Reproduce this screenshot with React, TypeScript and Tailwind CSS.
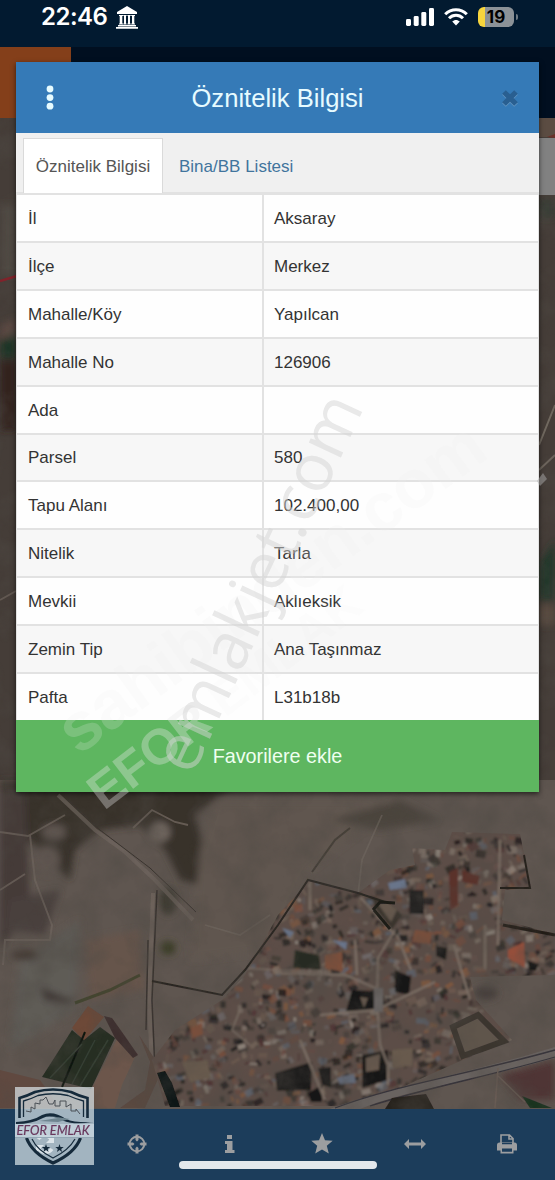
import type { ReactNode } from "react";

const rows = [
  { label: "İl", value: "Aksaray" },
  { label: "İlçe", value: "Merkez" },
  { label: "Mahalle/Köy", value: "Yapılcan" },
  { label: "Mahalle No", value: "126906" },
  { label: "Ada", value: "" },
  { label: "Parsel", value: "580" },
  { label: "Tapu Alanı", value: "102.400,00" },
  { label: "Nitelik", value: "Tarla" },
  { label: "Mevkii", value: "Aklıeksik" },
  { label: "Zemin Tip", value: "Ana Taşınmaz" },
  { label: "Pafta", value: "L31b18b" },
];

function random(seed: number) {
  let s = seed;
  return () => {
    s = (s * 16807) % 2147483647;
    return s / 2147483647;
  };
}

const roofs = [
  "#7b4f3c", "#6b4a40", "#1f1a1b", "#17191a", "#6f6a6b", "#5d6470", "#82766c",
  "#84593f", "#4d3030", "#2b2a26", "#7a6a5e", "#958b82", "#3a3432", "#66504a",
  "#6d5a50", "#25211f",
];

const rnd = random(4217);
const houses = Array.from({ length: 1900 }, () => ({
  x: 145 + rnd() * 410,
  y: 830 + rnd() * 280,
  w: 2 + rnd() * 8,
  h: 2 + rnd() * 6,
  r: -40 + rnd() * 60,
  fill: roofs[Math.floor(rnd() * roofs.length)],
  o: 0.4 + rnd() * 0.5,
}));

function SatelliteMap() {
  return (
    <svg className="absolute inset-0" width="555" height="1180" viewBox="0 0 555 1180">
      <defs>
        <filter id="soft" x="-20%" y="-20%" width="140%" height="140%">
          <feGaussianBlur stdDeviation="3.5" />
        </filter>
        <filter id="slight">
          <feGaussianBlur stdDeviation="0.7" />
        </filter>
        <filter id="roofs">
          <feGaussianBlur stdDeviation="0.8" />
        </filter>
        <filter id="grain" x="0" y="0" width="100%" height="100%">
          <feTurbulence type="fractalNoise" baseFrequency="0.03" numOctaves="6" seed="8" />
          <feColorMatrix values="0 0 0 0 0.08  0 0 0 0 0.07  0 0 0 0 0.06  1.9 0 0 0 -0.75" />
        </filter>
        <clipPath id="village">
          <path d="M310 880L358 893L390 870L415 865L412 848L445 850L452 832L520 834L531 888L505 890L502 920L555 934V975L470 977L476 1000L512 1040L458 1062L400 1088L345 1106H165L152 1060L175 1030L222 1000L245 975L278 915Z" />
        </clipPath>
      </defs>
      <rect width="555" height="1180" fill="#5f5650" />
      <rect width="555" height="780" fill="#453d38" />

      <g filter="url(#soft)">
        <path d="M0 780H240L195 815L207 860L200 885L180 880L165 850L140 825L100 830L75 850L70 880L48 860L30 840L0 900Z" fill="#37312c" />
        <path d="M0 790H25L30 910L0 950Z" fill="#443a39" />
        <path d="M10 900L60 890L45 935L5 930Z" fill="#493f3d" />
        <path d="M20 960L80 920L75 1010L10 1050Z" fill="#5e5c56" />
        <path d="M215 800H400L310 870L270 950L190 960L200 850Z" fill="#61574f" />
        <path d="M330 820L400 800L440 820L380 830Z" fill="#4b453e" />
        <path d="M85 940L140 930L145 990L90 1000Z" fill="#66554c" />
        <path d="M40 987L70 1000L80 992L70 1004L45 1000Z" fill="#3d3431" />
        <path d="M500 1075L555 1060V1100L520 1100Z" fill="#4f3634" />
        <ellipse cx="486" cy="993" rx="12" ry="7" fill="#453d3b" />
        <ellipse cx="168" cy="948" rx="8" ry="7" fill="#3a3c27" />
        <ellipse cx="168" cy="901" rx="9" ry="14" fill="#3d3a33" />
        <ellipse cx="160" cy="832" rx="10" ry="10" fill="#756b63" />
        <ellipse cx="47" cy="860" rx="13" ry="14" fill="#615751" />
        <ellipse cx="54" cy="832" rx="12" ry="8" fill="#615751" />
        <ellipse cx="25" cy="955" rx="14" ry="5" fill="#423733" />
        <path d="M0 325L16 318V332L0 340Z" fill="#5b4a42" />
        <path d="M0 342L16 334V358L0 358Z" fill="#1d3425" />
        <path d="M0 360H16V430H0Z" fill="#30241f" />
        <path d="M0 205H16V275H0Z" fill="#4f4a43" />
        <path d="M539 200H555V218H539Z" fill="#333b30" />
        <path d="M539 565L555 540V600H539Z" fill="#22392b" />
        <path d="M539 605H555V625H539Z" fill="#5a4b41" />
      </g>

      <g fill="none" stroke="#70675f" filter="url(#slight)">
        <path d="M58 795L95 830L125 852L155 880L193 920" strokeWidth="4" opacity=".7" />
        <path d="M68 800L100 830L150 868L196 912" stroke="#3a342f" />
        <path d="M153 893L149 1000L152 1070" strokeWidth="4" opacity=".8" />
        <path d="M157 890L152 1000L155 1070M148 940L146 1030" stroke="#37312e" strokeWidth="1.4" />
        <path d="M30 835L35 880L52 925L50 940L5 940L3 965M0 832L28 836L65 815" strokeWidth="2" opacity=".7" />
        <path d="M133 828L152 810L175 822L188 825" strokeWidth="1.8" opacity=".8" />
        <path d="M0 890L25 874M0 600L16 591" strokeWidth="2" opacity=".7" />
        <path d="M358 895L362 860L382 815M360 897L395 935M205 925L240 935L270 915" strokeWidth="1.8" opacity=".6" />
        <path d="M312 872L335 840L350 828" stroke="#3b362f" strokeWidth="2" opacity=".7" />
        <path d="M539 445L555 405M539 470L555 455" strokeWidth="2" />
      </g>
      <path d="M75 1003L110 990L140 975" fill="none" stroke="#3e4229" strokeWidth="3" opacity=".8" filter="url(#slight)" />

      <g filter="url(#slight)">
        <path d="M72 1028L88 1006L104 1017L84 1041Z" fill="#6d4838" />
        <path d="M72 1030L84 1040L100 1027L115 1038L91 1089L42 1077Z" fill="#262d24" />
        <path d="M85 1032L62 1087" stroke="#101611" strokeWidth="2" />
        <path d="M50 1078L82 1044M72 1084L95 1040M80 1086L108 1040" stroke="#353f33" strokeWidth="1.5" />
        <path d="M118 1037L135 1057L122 1085L115 1108H82Z" fill="#6c574c" />
        <path d="M0 1070L40 1080L60 1108H0Z" fill="#604a40" />
        <path d="M139 1035L150 1062L145 1090L120 1108L145 1108L162 1070Z" fill="#5a4841" />
        <path d="M104 1016L112 1018L122 1032L138 1055L133 1058L115 1038Z" fill="#3d2e2e" />
      </g>

      <g clipPath="url(#village)" filter="url(#roofs)">
        <rect x="140" y="820" width="415" height="290" fill="#5b4e47" />
        {houses.map((h, i) => (
          <rect
            key={i}
            x={h.x}
            y={h.y}
            width={h.w}
            height={h.h}
            fill={h.fill}
            opacity={h.o}
            transform={`rotate(${h.r} ${h.x} ${h.y})`}
          />
        ))}
        <g fill="#161413">
          <path d="M275 1073L312 1062L311 1090L277 1091ZM318 1068L331 1067V1088L322 1085ZM308 1093L322 1085V1102L311 1102Z" />
          <path d="M409 890H424V914H409ZM436 946L447 948L446 960L436 956ZM395 970L411 977L409 995L395 992ZM527 960L539 964L536 971L529 970Z" />
          <path d="M352 990L374 991V1011L346 1011Z" />
          <path d="M362 1055L388 1050V1080L362 1088Z" />
          <path d="M295 950L319 955L321 970L293 968Z" fill="#272923" />
          <path d="M372 896L392 905L402 915L392 930L375 908Z" fill="#3b352e" />
        </g>
        <path d="M366 1058L380 1054L379 1070L366 1072ZM360 997L368 998L364 1008Z" fill="#66594d" />
        <path d="M378 904L388 902L397 910L391 922Z" fill="#65594d" />
        <path d="M449 872L458 868V905L450 910ZM462 870L480 876L478 885L462 882Z" fill="#5a302b" />
        <path d="M508 950L524 942L525 968L508 958Z" fill="#99503a" />
        <path d="M325 955L342 952L343 972L325 968ZM415 930L432 932L430 944L412 942ZM190 1028L202 1023L203 1034L192 1039Z" fill="#7d4f3a" />
        <path d="M388 883L405 879L407 888L390 890ZM337 1078L354 1074L356 1083L340 1084ZM282 928L294 932L290 938ZM332 940L347 942L346 950Z" fill="#69758a" />
        <path d="M392 1050L413 1048L412 1066L392 1068ZM182 1062L207 1060L211 1078L190 1082Z" fill="#685a4d" />
        <g fill="none" stroke="#7a6d64" strokeWidth="2.4">
          <path d="M310 880V910M395 935L360 897M395 930L378 958L377 1000L380 1045L388 1065L388 1085M275 973L345 975L380 990M320 1015L376 1010L435 982M397 935L411 970M500 840L498 945M454 945L470 1000M300 1040L325 1100M485 925V970M355 940L357 975" />
          <path d="M245 968L275 970L330 972M240 1010L232 1030L250 1045" strokeWidth="1.5" />
        </g>
        <path d="M374 988H383V1012H374Z" fill="#696564" />
      </g>
      <path d="M157 1073L165 1071L172 1083L180 1107H170Z" fill="#101312" filter="url(#slight)" />

      <g fill="none" filter="url(#slight)">
        <path d="M152 981L222 995L245 970L278 925L308 880L358 893L385 902" stroke="#2a2621" strokeWidth="2" />
        <path d="M503 925L555 935" stroke="#211d19" strokeWidth="3" />
        <path d="M524 855L530 888L500 888" stroke="#27231e" strokeWidth="2" />
        <path d="M373 910L380 902L395 903M374 910L390 929" stroke="#1d1c18" strokeWidth="3" />
        <path d="M453 1027L478 1015L504 1041L463 1056Z" fill="#5f544c" stroke="#3b352f" strokeWidth="6" />
      </g>

      <g filter="url(#slight)">
        <path d="M330 1109C390 1087 470 1073 555 1047V1058C470 1082 410 1089 360 1109Z" fill="#696361" />
        <path d="M335 1108C395 1085 470 1074 555 1050M370 1106C425 1088 490 1076 555 1057" fill="none" stroke="#37343a" strokeWidth="1.3" />
        <path d="M392 1098L426 1094L434 1109H385Z" fill="#27211f" />
        <path d="M522 1096L552 1108H530Z" fill="#18301e" />
        <path d="M498 1068L495 1108M498 1076L525 1102" stroke="#6b5d55" strokeWidth="1.5" />
      </g>
      <rect width="555" height="1110" filter="url(#grain)" opacity=".55" />
      <path d="M0 281L17 276" stroke="#80232b" strokeWidth="2.5" />
      <rect x="530" y="118" width="25" height="19" fill="#5b4c42" />
      <path d="M547 137L555 134V138Z" fill="#6c3029" />
      <rect x="530" y="138" width="25" height="57" fill="#818181" />
    </svg>
  );
}

function StatusBar() {
  return (
    <div className="flex h-[47px] items-start justify-between bg-[#021a30] pl-[41px] pr-[37px] pt-[5px] text-white">
      <div className="flex items-center">
        <span className="font-['Inter',sans-serif] text-[24px] font-semibold leading-6 tracking-[-0.5px]">22:46</span>
        <svg className="ml-[9px] mt-px" width="22" height="23" viewBox="0 0 22 23" fill="currentColor">
          <path d="M11 0L21 6V8H1V6ZM2 19H20V20.5H2ZM0 21H22V22.7H0Z" />
          <path d="M3 9H7V10H6.3V17.5H7V18.5H3V17.5H3.7V10H3ZM7.3 9H10.6V10H10V17.5H10.6V18.5H7.3V17.5H8V10H7.3ZM11.4 9H14.7V10H14V17.5H14.7V18.5H11.4V17.5H12V10H11.4ZM15.2 9H19V10H18.3V17.5H19V18.5H15.2V17.5H16V10H15.2Z" />
        </svg>
      </div>
      <div className="mt-0.5 flex items-center">
        <svg width="28" height="18" viewBox="0 0 28 18" fill="currentColor">
          <rect y="11" width="5" height="7" rx="1.4" />
          <rect x="7.7" y="8" width="5" height="10" rx="1.4" />
          <rect x="15.3" y="4" width="5" height="14" rx="1.4" />
          <rect x="23" width="5" height="18" rx="1.4" />
        </svg>
        <svg className="ml-2.5" width="24" height="18" viewBox="0 0 24 18" fill="none" stroke="currentColor" strokeWidth="3">
          <path d="M1.2 6.3C7.3.1 16.7.1 22.8 6.3M5 10.2C9 6.2 15 6.2 19 10.2" />
          <path d="M8.2 13.6C10.5 11.5 13.5 11.5 15.8 13.6L12 17.5Z" fill="currentColor" stroke="none" />
        </svg>
        <div className="ml-2.5 flex h-5 w-9 items-center justify-center overflow-hidden rounded-md bg-linear-to-r from-[#f7d53d] from-20% to-[#8c9297] to-20% font-['Inter',sans-serif] text-[17px] font-bold leading-5 text-black">
          19
        </div>
        <span className="ml-0.5 h-1.5 w-0.5 rounded-r bg-[#6f7a84]" />
      </div>
    </div>
  );
}

function Dialog() {
  return (
    <section className="absolute left-4 top-[62px] flex h-[730px] w-[523px] flex-col bg-white shadow-[0_2px_5px_rgba(0,0,0,0.6)]">
      <header className="flex h-[71px] shrink-0 items-center justify-between bg-[#357ab7] pl-[30px] pr-5">
        <svg width="8" height="26" viewBox="0 0 8 26" fill="#e6fbff">
          <circle cx="4" cy="4" r="3.4" />
          <circle cx="4" cy="12.6" r="3.4" />
          <circle cx="4" cy="21.2" r="3.4" />
        </svg>
        <h1 className="text-[25.6px] leading-8 text-[#e6fbff]">Öznitelik Bilgisi</h1>
        <svg width="18" height="18" viewBox="0 0 18 18">
          <path d="M3 4L15 16M15 4L3 16" stroke="#6496c2" strokeWidth="5.2" />
          <path d="M3 3L15 15M15 3L3 15" stroke="#295f91" strokeWidth="5.2" />
        </svg>
      </header>
      <nav className="flex h-[60px] shrink-0 items-end border-b border-[#e2e2e2] bg-[#f0f0f0] pl-[7px]">
        <span className="-mb-px flex h-[55px] w-[140px] items-center justify-center border border-b-0 border-[#dadada] bg-white pt-0.5 text-[#555]">
          Öznitelik Bilgisi
        </span>
        <span className="flex h-[54px] items-center pl-4 pt-[3px] text-[#41749d]">Bina/BB Listesi</span>
      </nav>
      <dl className="grid min-h-0 flex-1 grid-rows-11 border-x border-[#e2e2e2]">
        {rows.map((row) => (
          <div
            key={row.label}
            className="grid min-h-0 grid-cols-[245px_1fr] items-stretch border-t-2 border-[#e2e2e2] odd:bg-[#fefefe] even:bg-[#f7f7f7]"
          >
            <dt className="flex items-center pl-[11px] pt-[2px]">{row.label}</dt>
            <dd className="flex items-center border-l-2 border-[#e2e2e2] pl-2.5 pt-[2px]">{row.value}</dd>
          </div>
        ))}
      </dl>
      <button className="h-[72px] shrink-0 bg-[#5eb660] text-[19.8px] text-[#effff0]">Favorilere ekle</button>
    </section>
  );
}

function Watermarks() {
  return (
    <svg className="pointer-events-none absolute inset-0" width="555" height="1180" viewBox="0 0 555 1180">
      <text x="0" y="0" transform="translate(78 756) rotate(-36)" fontSize="68" fontWeight="700" textLength="510" className="fill-[#eeeeee]/20">
        sahibinden.com
      </text>
      <text x="0" y="0" transform="translate(104 811) rotate(-37.5)" fontSize="50" fontWeight="700" className="fill-[#e8e8e8]/35">
        EFOR
        <tspan className="fill-[#f0f0f0]/10"> EMLAK</tspan>
      </text>
      <path d="M537 481L543 473L547 479L540 486Z" className="fill-[#aaa]/50" />
      <text x="0" y="0" transform="translate(192 777) rotate(-65)" fontSize="66" textLength="408" className="fill-[#d4d4d4]/50 font-['Open_Sans',sans-serif]">
        emlakjet.com
      </text>
    </svg>
  );
}

function ToolIcon({ children }: { children: ReactNode }) {
  return (
    <span className="flex justify-center">
      <svg width="22" height="22" viewBox="0 0 22 22" fill="#9c9ea0" stroke="none">
        {children}
      </svg>
    </span>
  );
}

function Toolbar() {
  return (
    <footer className="relative mt-auto flex h-[71px] justify-between bg-[#1c3d5b] pl-[34px] pr-[37px] pt-6">
      <ToolIcon>
        <path d="M18 8A8 8 0 0 0 4 6M4 14A8 8 0 0 0 18 16" fill="none" stroke="#d4d9de" strokeWidth="3.5" />
        <path d="M20 2V10H12ZM2 20V12H10Z" fill="#d4d9de" />
      </ToolIcon>
      <ToolIcon>
        <circle cx="11" cy="11" r="7.3" fill="none" stroke="#9c9ea0" strokeWidth="2" />
        <path d="M9.5 1.5H12.5V7L11 8.5L9.5 7ZM9.5 20.5H12.5V15L11 13.5L9.5 15ZM1.5 9.5V12.5H7L8.5 11L7 9.5ZM20.5 9.5V12.5H15L13.5 11L15 9.5Z" />
      </ToolIcon>
      <ToolIcon>
        <path d="M8 2H13V6H8ZM6 8H13.5V17H15.5V20H6V17H8V11H6Z" />
      </ToolIcon>
      <ToolIcon>
        <path d="M11 0L14 7.2L21.7 7.8L15.8 12.8L17.8 20.5L11 16.4L4.2 20.5L6.2 12.8L.3 7.8L8 7.2Z" />
      </ToolIcon>
      <ToolIcon>
        <path d="M0 11L5 6V9.4H17V6L22 11L17 16V12.6H5V16Z" />
      </ToolIcon>
      <ToolIcon>
        <path d="M5 10V2H13.5L17 5.5V10M13 2V6H17" fill="none" stroke="#9c9ea0" strokeWidth="1.6" />
        <path d="M3.5 9.5H18.5Q21 9.5 21 12V17.5H17.5V20.5H4.5V17.5H1V12Q1 9.5 3.5 9.5Z" />
        <path d="M6 15.5H16V18.8H6ZM6 10H16V11.2H6Z" fill="#1c3d5b" />
      </ToolIcon>
      <span className="absolute left-[179px] top-[52px] h-2 w-[198px] rounded-full bg-[#e3e8ec]" />
    </footer>
  );
}

function AgencyLogo() {
  return (
    <svg className="absolute left-[15px] top-[1087px]" width="79" height="78" viewBox="0 0 79 78">
      <rect width="79" height="78" fill="#dfe9ee" opacity=".69" />
      <g fill="none" stroke="#152a3b">
        <path d="M4.5 31V11Q12 9 20 5Q38 0 56 5Q64 9 72.5 11V31" strokeWidth="2.6" />
        <path d="M8.5 30V14Q16 12 23 8.5Q38 5 53 8.5Q61 12 68.5 14V30" strokeWidth="1.3" />
        <path d="M11.5 51Q17 66 38 76Q60 66 65.5 51" strokeWidth="3.2" />
        <path d="M17 52Q22 63 38 71Q54 63 60 52" strokeWidth="1.2" />
        <path d="M11 24L16 25V20L20 22V16L25 17V13H28L31 10L34 17H38L40 13V19H45V14H51V20L56 17V24H61V22L65 27" strokeWidth="1" stroke="#4b5057" />
      </g>
      <path d="M1 35Q18 34 27 28Q38 23 51 32Q60 36 79 35Q59 38 49 34Q36 27 28 31Q17 37 1 37Z" fill="#152a3b" />
      <path d="M24 34L43 31L35 29L55 32L43 35Z" fill="#6f8590" />
      <rect x="0" y="37" width="79" height="14" fill="#c4d2dc" opacity=".85" />
      <path d="M0 50.5H79" stroke="#7f95a5" strokeWidth=".7" />
      <text x="1.5" y="47.5" fontSize="12.5" fontStyle="italic" textLength="73" lengthAdjust="spacingAndGlyphs" fill="#68375c" stroke="#68375c" strokeWidth=".2" className="font-['Lato',sans-serif]">
        EFOR EMLAK
      </text>
      <path d="M31 57L32 60H35.2L32.7 61.9L33.6 65L31 63.1L28.4 65L29.3 61.9L26.8 60H30ZM44.5 57L45.5 60H48.7L46.2 61.9L47.1 65L44.5 63.1L41.9 65L42.8 61.9L40.3 60H43.5Z" fill="#152a3b" />
    </svg>
  );
}

export default function App() {
  return (
    <main className="relative flex h-[1180px] w-[555px] flex-col overflow-hidden bg-[#453d38] font-['Liberation_Sans',sans-serif] text-[17px] leading-6 text-[#333]">
      <SatelliteMap />
      <div className="relative">
        <StatusBar />
        <div className="flex h-[71px] bg-[#010f20]">
          <div className="w-[71px] bg-[#843f1a]" />
        </div>
      </div>
      <Toolbar />
      <Dialog />
      <Watermarks />
      <AgencyLogo />
    </main>
  );
}
